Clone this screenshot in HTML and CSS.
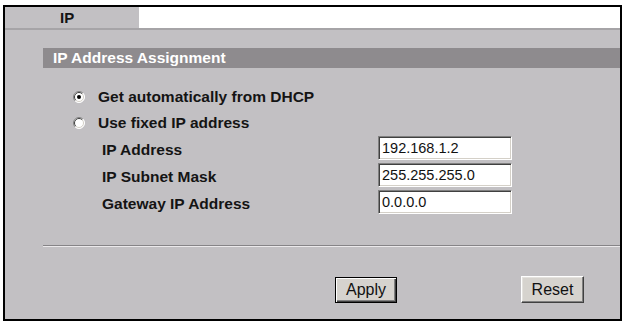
FILE: index.html
```html
<!DOCTYPE html>
<html>
<head lang="en">
    <meta charset="UTF-8">
    <title>IP</title>
    <link rel="stylesheet" href="styles.css">
</head>
<body>
<div class="frame">
    <div class="tab_nav">
        <div class="tab active">IP</div>
        <div class="tab_rest"></div>
    </div>
    <div class="tab_content">
        <div class="section_title">IP Address Assignment</div>
        <div class="options">
            <label class="radio_row">
                <svg class="radio" width="12" height="12" viewBox="0 0 12 12">
                    <circle cx="6" cy="6" r="5.5" fill="#fff"/>
                    <path d="M2.1 9.9 A5.5 5.5 0 0 1 9.9 2.1" fill="none" stroke="#808080"/>
                    <path d="M9.9 2.1 A5.5 5.5 0 0 1 2.1 9.9" fill="none" stroke="#fff"/>
                    <path d="M2.8 9.2 A4.5 4.5 0 0 1 9.2 2.8" fill="none" stroke="#404040"/>
                    <path d="M9.2 2.8 A4.5 4.5 0 0 1 2.8 9.2" fill="none" stroke="#d4d0c8"/>
                    <circle cx="6" cy="6" r="2" fill="#000"/>
                </svg>
                Get automatically from DHCP
            </label>
            <label class="radio_row">
                <svg class="radio" width="12" height="12" viewBox="0 0 12 12">
                    <circle cx="6" cy="6" r="5.5" fill="#fff"/>
                    <path d="M2.1 9.9 A5.5 5.5 0 0 1 9.9 2.1" fill="none" stroke="#808080"/>
                    <path d="M9.9 2.1 A5.5 5.5 0 0 1 2.1 9.9" fill="none" stroke="#fff"/>
                    <path d="M2.8 9.2 A4.5 4.5 0 0 1 9.2 2.8" fill="none" stroke="#404040"/>
                    <path d="M9.2 2.8 A4.5 4.5 0 0 1 2.8 9.2" fill="none" stroke="#d4d0c8"/>
                </svg>
                Use fixed IP address
            </label>
            <div class="field">
                <span class="field_label">IP Address</span>
                <input class="text_input" type="text" value="192.168.1.2">
            </div>
            <div class="field">
                <span class="field_label">IP Subnet Mask</span>
                <input class="text_input" type="text" value="255.255.255.0">
            </div>
            <div class="field">
                <span class="field_label">Gateway IP Address</span>
                <input class="text_input" type="text" value="0.0.0.0">
            </div>
        </div>
        <div class="separator"></div>
        <div class="buttons">
            <button class="btn btn_default">Apply</button>
            <button class="btn">Reset</button>
        </div>
    </div>
</div>
</body>
</html>
```

FILE: styles.css
```css
body {
    margin: 0;
    background: #fff;
    font-family: "Liberation Sans", Arial, sans-serif;
    color: #141414;
}
.frame {
    width: 615px;
    height: 312px;
    margin: 5px 0 0 3px;
    border: 2px solid #000;
    display: flex;
    flex-direction: column;
    background: #c2c0c3;
}
.tab_nav {
    display: flex;
    height: 21px;
    border-bottom: 2px solid #a6a4a7;
}
.tab_nav .tab {
    width: 79px;
    padding-left: 55px;
    background: #c2c0c3;
    font-size: 15px;
    font-weight: bold;
    line-height: 21px;
}
.tab_nav .tab_rest {
    flex: 1;
    background: #fff;
}
.tab_content {
    flex: 1;
    padding-top: 18px;
}
.section_title {
    margin-left: 38px;
    height: 20px;
    padding-left: 10px;
    background: #8e8b8e;
    color: #fff;
    font-size: 15.5px;
    font-weight: bold;
    line-height: 20px;
}
.options {
    padding-top: 16px;
    font-size: 15.5px;
    font-weight: bold;
}
.radio_row {
    display: flex;
    align-items: center;
    height: 26px;
    padding-left: 68px;
    gap: 13px;
}
.radio {
    display: block;
    flex: none;
}
.field {
    display: grid;
    grid-template-columns: 276px 134px;
    height: 27px;
    padding-left: 97px;
}
.field_label {
    line-height: 27px;
}
.text_input {
    box-sizing: border-box;
    width: 134px;
    height: 24px;
    margin: 0;
    padding: 0 0 0 3px;
    border: 1px solid;
    border-color: #808080 #fff #fff #808080;
    box-shadow: inset 1px 1px #404040, inset -1px -1px #d4d0c8;
    background: #fff;
    font-family: "Liberation Sans", Arial, sans-serif;
    font-size: 14.5px;
    font-weight: normal;
    color: #111;
}
.separator {
    margin: 28px 0 0 38px;
    border-top: 1px solid #868487;
    border-bottom: 1px solid #ebe9eb;
}
.buttons {
    display: flex;
    justify-content: space-between;
    align-items: flex-start;
    margin-top: 29px;
    padding: 0 36px 0 330px;
}
.btn {
    box-sizing: border-box;
    width: 63px;
    height: 27px;
    padding: 0;
    border: 1px solid;
    border-color: #fff #404040 #404040 #fff;
    box-shadow: inset -1px -1px #808080, inset 1px 1px #e4e2de;
    background: #d6d3ce;
    font-family: "Liberation Sans", Arial, sans-serif;
    font-size: 16px;
    color: #111;
}
.btn_default {
    width: 62px;
    height: 26px;
    margin-top: 1px;
    border: 1px solid #000;
    box-shadow: inset 1px 1px #fff, inset -1px -1px #404040, inset -2px -2px #808080;
}
```
